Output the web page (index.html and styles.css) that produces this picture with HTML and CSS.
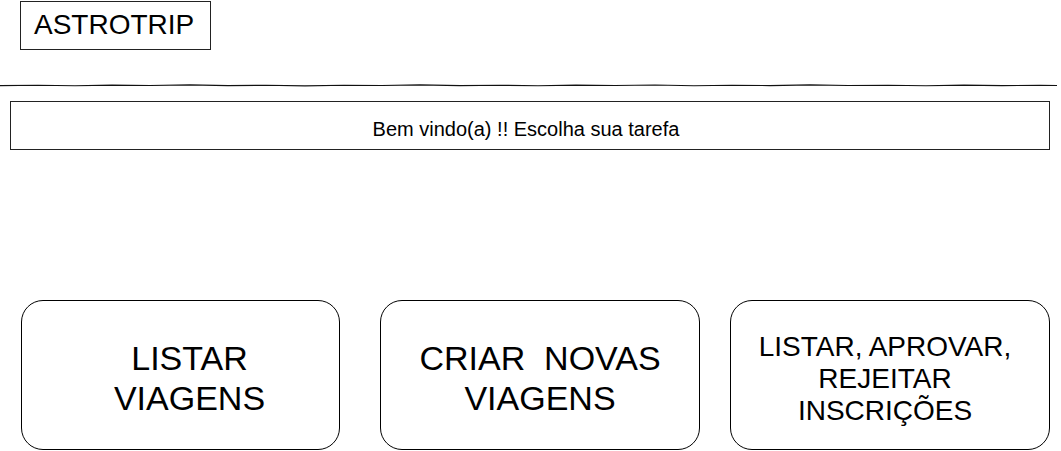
FILE: index.html
```html
<!DOCTYPE html>
<html lang="pt">
<head>
<meta charset="utf-8">
<title>ASTROTRIP</title>
<link rel="stylesheet" href="styles.css">
</head>
<body>
<header class="header">
  <div class="brand">ASTROTRIP</div>
</header>
<svg class="divider" width="1058" height="5" viewBox="0 0 1058 5" aria-hidden="true">
  <path d="M0 2.6 L38 2.2 L75 2.8 L112 2.1 L150 2.5 L190 1.9 L228 2.6 L266 2.3 L305 2.9 L344 2.2 L382 2.5 L420 1.9 L460 2.6 L500 2.2 L538 2.8 L576 2.1 L615 2.5 L655 2.0 L694 2.7 L732 2.2 L770 2.6 L810 1.9 L848 2.5 L888 2.2 L926 2.8 L964 2.1 L1002 2.6 L1040 2.2 L1057 2.5" fill="none" stroke="#111" stroke-width="1.1"/>
</svg>
<div class="welcome">Bem vindo(a) !! Escolha sua tarefa</div>
<main class="cards">
  <div class="card card-list">LISTAR<br>VIAGENS</div>
  <div class="card card-create">CRIAR&nbsp; NOVAS<br>VIAGENS</div>
  <div class="card card-manage">LISTAR, APROVAR,<br>REJEITAR<br>INSCRIÇÕES</div>
</main>
</body>
</html>
```

FILE: styles.css
```css
html, body {
  margin: 0;
  padding: 0;
  background: #fff;
}

body {
  font-family: "Liberation Sans", Arial, Helvetica, sans-serif;
  color: #000;
  width: 1061px;
  height: 451px;
  overflow: hidden;
}

.header {
  padding: 1px 0 0 20px;
  height: 50px;
}

.brand {
  display: inline-block;
  box-sizing: border-box;
  width: 191px;
  height: 49px;
  border: 1px solid #222;
  padding: 7px 0 0 13px;
  font-size: 28px;
  line-height: 32px;
  white-space: nowrap;
}

.divider {
  display: block;
  margin-top: 32px;
}

.welcome {
  box-sizing: border-box;
  margin: 13px 0 0 10px;
  width: 1040px;
  height: 49px;
  border: 1px solid #222;
  padding: 16px 8px 0 0;
  text-align: center;
  font-size: 20px;
  line-height: 23px;
}

.cards {
  display: flex;
  margin-top: 150px;
  padding-left: 21px;
}

.card {
  box-sizing: border-box;
  height: 150px;
  border: 1px solid #000;
  border-radius: 22px;
  display: flex;
  align-items: center;
  justify-content: center;
  text-align: center;
  padding-top: 6px;
}

.card-list {
  width: 319px;
  font-size: 34px;
  line-height: 40px;
  padding-left: 18px;
}

.card-create {
  width: 320px;
  margin-left: 40px;
  font-size: 34px;
  line-height: 40px;
}

.card-manage {
  width: 320px;
  margin-left: 30px;
  font-size: 28px;
  line-height: 32px;
  padding-right: 10px;
  padding-top: 8px;
}
```
